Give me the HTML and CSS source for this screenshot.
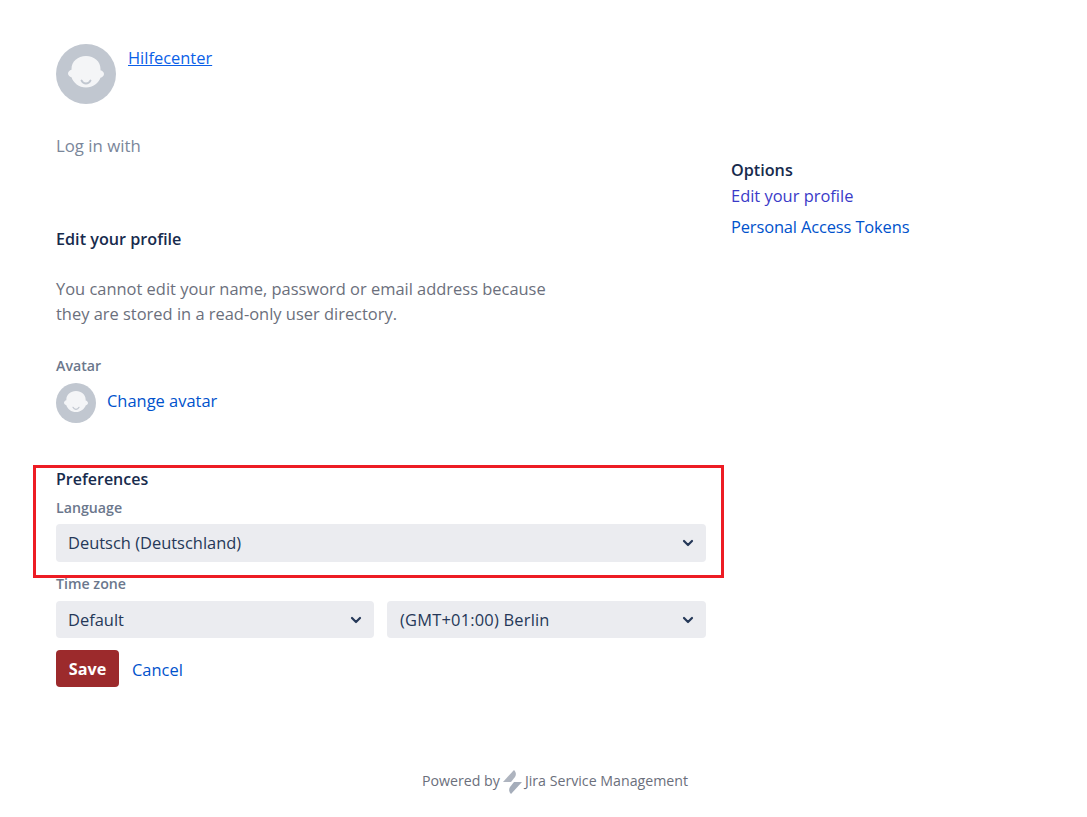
FILE: index.html
```html
<!DOCTYPE html>
<html lang="de">
<head>
<meta charset="utf-8">
<title>Edit your profile</title>
<link rel="stylesheet" href="styles.css">
</head>
<body>
<div class="page">
  <header class="top">
    <svg class="avatar-lg" viewBox="0 0 60 60" aria-hidden="true">
      <circle cx="30" cy="30" r="30" fill="#c1c7d0"/>
      <path d="M30 12c-8.300 0-14.500 5.500-14.500 13v.8c-2 .5-3.500 2-3.500 3.700s1.500 3.200 3.500 3.700C17 38.500 23 43.500 30 43.500s13-5 14.500-9.800c2-.5 3.500-2 3.500-3.700s-1.500-3.200-3.500-3.700V25c0-7.500-6.200-13-14.500-13z" fill="#f4f5f7"/>
      <path d="M25.500 36.500c1 2 2.700 3 4.500 3s3.500-1 4.500-3" fill="none" stroke="#c1c7d0" stroke-width="1.800" stroke-linecap="round"/>
    </svg>
    <a class="help-link" href="#">Hilfecenter</a>
  </header>
  <div class="columns">
    <main class="main">
      <p class="login-with">Log in with</p>
      <h2 class="title">Edit your profile</h2>
      <p class="notice">You cannot edit your name, password or email address because<br>they are stored in a read-only user directory.</p>
      <div class="label avatar-label">Avatar</div>
      <div class="avatar-row">
        <svg class="avatar-sm" viewBox="0 0 60 60" aria-hidden="true">
          <circle cx="30" cy="30" r="30" fill="#c1c7d0"/>
          <path d="M30 12c-8.300 0-14.500 5.500-14.500 13v.8c-2 .5-3.500 2-3.500 3.700s1.500 3.200 3.500 3.700C17 38.500 23 43.500 30 43.500s13-5 14.500-9.800c2-.5 3.500-2 3.500-3.700s-1.500-3.200-3.500-3.700V25c0-7.500-6.200-13-14.500-13z" fill="#f4f5f7"/>
          <path d="M25.500 36.500c1 2 2.700 3 4.500 3s3.500-1 4.500-3" fill="none" stroke="#c1c7d0" stroke-width="1.800" stroke-linecap="round"/>
        </svg>
        <a class="link avatar-link" href="#">Change avatar</a>
      </div>
      <h3 class="prefs">Preferences</h3>
      <div class="label lang-label">Language</div>
      <div class="select lang-select">
        <span>Deutsch (Deutschland)</span>
        <svg class="chev" viewBox="0 0 12 8" aria-hidden="true"><path d="M2 2l4 4 4-4" fill="none" stroke="#253858" stroke-width="2.200" stroke-linecap="round" stroke-linejoin="round"/></svg>
      </div>
      <div class="label tz-label">Time zone</div>
      <div class="tz-row">
        <div class="select"><span>Default</span>
          <svg class="chev" viewBox="0 0 12 8" aria-hidden="true"><path d="M2 2l4 4 4-4" fill="none" stroke="#253858" stroke-width="2.200" stroke-linecap="round" stroke-linejoin="round"/></svg>
        </div>
        <div class="select tz-city"><span>(GMT+01:00) Berlin</span>
          <svg class="chev" viewBox="0 0 12 8" aria-hidden="true"><path d="M2 2l4 4 4-4" fill="none" stroke="#253858" stroke-width="2.200" stroke-linecap="round" stroke-linejoin="round"/></svg>
        </div>
      </div>
      <div class="actions">
        <button class="save" type="button">Save</button>
        <a class="link cancel" href="#">Cancel</a>
      </div>
    </main>
    <aside class="side">
      <div class="side-title">Options</div>
      <a class="link side-link visited" href="#">Edit your profile</a>
      <a class="link side-link tokens" href="#">Personal Access Tokens</a>
    </aside>
  </div>
  <footer class="footer">
    <span>Powered by</span>
    <svg class="logo" viewBox="0 0 19 24" aria-hidden="true">
      <path d="M11 0L0 12h8l4-5c1.500-2.500 1-5-1-7z" fill="#aeb4bf"/>
      <path d="M19 12h-8l-4 5c-1.500 2.500-1 5 1 7z" fill="#a5adba"/>
    </svg>
    <span>Jira Service Management</span>
  </footer>
</div>
<div class="highlight"></div>
</body>
</html>
```
FILE: styles.css
```css
* { box-sizing: border-box; }
html, body { margin: 0; padding: 0; }
body {
  background: #fff;
  font-family: "Open Sans", "Noto Sans", sans-serif;
  font-size: 16.45px;
  color: #172b4d;
  position: relative;
  height: 817px;
  overflow: hidden;
}
.page { padding: 44px 0 0 56px; width: 1087px; }
.top { display: flex; align-items: flex-start; gap: 12px; height: 60px; }
.avatar-lg { width: 60px; height: 60px; display: block; }
.help-link { color: #0b5fe8; line-height: 28px; }
.columns { display: flex; }
.main { width: 650px; flex: none; }
.login-with { margin: 28px 0 0; font-size: 16.8px; line-height: 28px; color: #7a869a; }
.title { margin: 67px 0 0; font-size: 16.2px; font-weight: 600; line-height: 24px; color: #172b4d; }
.notice { margin: 25px 0 0; line-height: 25px; color: #6b6f7c; }
.label { font-size: 14.2px; font-weight: 600; color: #6b778c; line-height: 20px; }
.avatar-label { margin-top: 30px; }
.avatar-row { display: flex; align-items: center; gap: 11px; margin-top: 7px; }
.avatar-sm { width: 40px; height: 40px; display: block; }
.avatar-link { margin-bottom: 5px; }
.link { color: #0052cc; text-decoration: none; }
.prefs { margin: 44px 0 0; font-size: 16px; font-weight: 600; line-height: 24px; color: #172b4d; }
.lang-label { margin-top: 7px; }
.select {
  display: flex; align-items: center; justify-content: space-between;
  height: 38px; padding: 0 12px;
  background: #ebecf0; border-radius: 4px; color: #253858;
}
.lang-select { margin-top: 6px; }
.lang-select span { margin-bottom: 2px; }
.tz-city { padding-left: 13px; }
.tz-city span { letter-spacing: 0.2px; }
.tz-label { margin-top: 12px; }
.tz-row { display: grid; grid-template-columns: 318px 319px; gap: 13px; margin-top: 7px; }
.tz-row .select { height: 37px; }
.chev { width: 12px; height: 8px; display: block; }
.actions { display: flex; align-items: center; gap: 13px; margin-top: 12px; }
.cancel { margin-top: 1px; }
.save {
  width: 63px; height: 37px; border: 0; border-radius: 4px;
  background: #9c2a2c; color: #fff; font: 700 16.2px "Open Sans", "Noto Sans", sans-serif; padding: 0;
}
.side { margin: 57px 0 0 25px; display: flex; flex-direction: column; align-items: flex-start; }
.side-title { font-size: 16.2px; font-weight: 600; line-height: 19px; color: #172b4d; }
.side-link { line-height: 31px; }
.visited { color: #3a3ac8; }
.tokens { letter-spacing: -0.13px; }
.footer {
  position: absolute; left: 0; right: 0; top: 769px;
  display: flex; justify-content: center; align-items: center; gap: 3px;
  width: 1110px; font-size: 14.2px; color: #6b6f7c; height: 26px;
}
.footer span { margin-bottom: 3px; }
.logo { width: 19px; height: 24px; display: block; }
.highlight {
  position: absolute; left: 33px; top: 465px; width: 691px; height: 113px;
  border: 3px solid #ed1c24;
}
```
